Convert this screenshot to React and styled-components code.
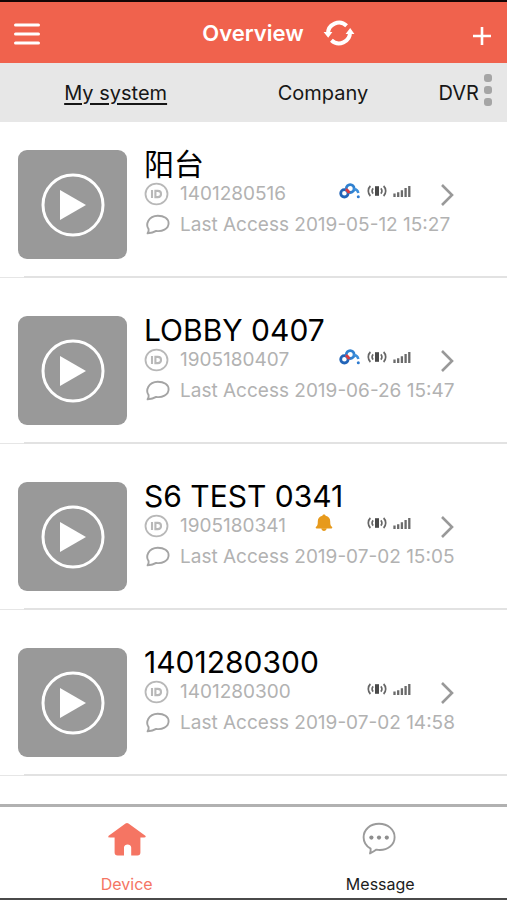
import { useState } from 'react'
import styled, { createGlobalStyle } from 'styled-components'

const GlobalStyle = createGlobalStyle`
  * {
    box-sizing: border-box;
  }
  body {
    margin: 0;
    background: #fff;
    font-family: Inter, 'Noto Sans CJK SC', sans-serif;
  }
  button {
    margin: 0;
    padding: 0;
    border: none;
    background: none;
    color: inherit;
    font: inherit;
    cursor: pointer;
  }
  svg {
    display: block;
  }
`

const Page = styled.div`
  display: flex;
  flex-direction: column;
  min-height: 100vh;
  border-top: 2px solid #140505;
  border-bottom: 2px solid #4a4a4a;
`

const Header = styled.header`
  display: grid;
  grid-template-columns: 1fr auto 1fr;
  align-items: center;
  height: 61px;
  padding: 0 15px 0 13px;
  background: #f0624d;
  color: #fff;
`

const HeaderCenter = styled.div`
  display: flex;
  align-items: center;
  gap: 19px;
  padding-left: 52px;
`

const Title = styled.h1`
  margin: 0;
  font-size: 22px;
  font-weight: 600;
  line-height: 28px;
`

const AddButton = styled.button`
  justify-self: end;
  padding-top: 6px;
`

const Tabs = styled.nav`
  display: grid;
  grid-template-columns: 1fr 1fr auto auto;
  align-items: center;
  height: 59px;
  padding: 0 15px 0 12px;
  background: #e7e7e7;
`

const Tab = styled.button`
  color: #161616;
  font-size: 20px;
  line-height: 28px;
  text-decoration: ${(p) => (p.$active ? 'underline' : 'none')};
  text-decoration-thickness: 2px;
  text-underline-offset: 3px;

  &:nth-child(3) {
    padding-left: 12px;
  }
`

const MoreButton = styled.button`
  display: flex;
  flex-direction: column;
  gap: 4px;
  padding: 0 0 6px 5px;
`

const Dot = styled.span`
  width: 8px;
  height: 8px;
  border-radius: 3px;
  background: #a5a5a5;
`

const List = styled.ul`
  flex: 1;
  margin: 0;
  padding: 0;
  list-style: none;
`

const Item = styled.li`
  padding-top: 38px;

  &:first-child {
    padding-top: 28px;
  }
`

const ItemBody = styled.div`
  display: flex;
  gap: 17px;
  padding: 0 53px 17px 18px;
`

const Thumb = styled.button`
  display: flex;
  flex: none;
  align-items: center;
  justify-content: center;
  width: 109px;
  height: 109px;
  border-radius: 9px;
  background: #999;
`

const Info = styled.div`
  flex: 1;
  min-width: 0;
`

const Name = styled.h2`
  margin: 0;
  color: #000;
  font-size: 30px;
  font-weight: 400;
  line-height: 28px;
`

const Line = styled.div`
  display: flex;
  align-items: center;
  height: 31px;
  color: #b2b2b2;
  font-size: 19px;
  white-space: nowrap;
`

const LineIcon = styled.span`
  flex: none;
  width: 36px;
`

const Status = styled.div`
  display: grid;
  grid-template-columns: 18px 22px 20px 18px;
  gap: 6px;
  align-items: center;
  margin-left: auto;
  padding-bottom: 6px;
`

const OpenButton = styled.button`
  margin-left: 29px;
  padding-top: 2px;
`

const Divider = styled.div`
  display: flex;
  align-items: flex-end;
  height: 2px;

  &::before {
    content: '';
    width: 24px;
    height: 1px;
    background: #e6e6e6;
  }

  &::after {
    content: '';
    flex: 1;
    height: 2px;
    background: #e2e2e2;
  }
`

const BottomBar = styled.nav`
  display: grid;
  grid-template-columns: 1fr 1fr;
  height: 94px;
  border-top: 3px solid #b1b1b1;
`

const BottomItem = styled.button`
  display: flex;
  flex-direction: column;
  align-items: center;
  justify-content: space-between;
  padding: 15px 0 4px;
  color: ${(p) => (p.$active ? '#f57563' : '#1c1c1c')};
  font-size: 16px;
  line-height: 20px;
`

const devices = [
  { name: '阳台', id: '1401280516', access: '2019-05-12 15:27', linked: true },
  { name: 'LOBBY 0407', id: '1905180407', access: '2019-06-26 15:47', linked: true },
  { name: 'S6 TEST 0341', id: '1905180341', access: '2019-07-02 15:05', alarm: true },
  { name: '1401280300', id: '1401280300', access: '2019-07-02 14:58' },
]

const MenuIcon = () => (
  <svg width="28" height="26" viewBox="0 0 28 26" fill="none" stroke="#fff" strokeWidth="3" strokeLinecap="round">
    <path d="M2.5 5h23M2.5 14h23M2.5 23h23" />
  </svg>
)

const RefreshIcon = () => (
  <svg width="32" height="30" viewBox="0 0 32 30" fill="none" stroke="#fff" strokeWidth="4">
    <path d="M5 16A11 11 0 0 1 23.600 7.800" />
    <path d="M27 14A11 11 0 0 1 8.400 22.200" />
    <path d="M.6 14h8.800l-4.200 5.800zM31.400 16h-8.800l4.600-6z" fill="#fff" stroke="none" />
  </svg>
)

const PlusIcon = () => (
  <svg width="20" height="20" viewBox="0 0 20 20" stroke="#fff" strokeWidth="2.6">
    <path d="M10 1v18M1 10h18" />
  </svg>
)

const PlayIcon = () => (
  <svg width="64" height="64" viewBox="0 0 64 64">
    <circle cx="32" cy="32" r="30" fill="none" stroke="#fff" strokeWidth="3" />
    <path d="M19 17v30l26-15z" fill="#fff" />
  </svg>
)

const IdIcon = () => (
  <svg width="25" height="24" viewBox="0 0 25 24" fill="none" stroke="#b8b8b8">
    <ellipse cx="12.5" cy="12" rx="11" ry="10.3" strokeWidth="1.8" />
    <path d="M8 8v8M11.400 8.900v6.200h2.400c4.300 0 4.300-6.200 0-6.200z" strokeWidth="2.100" />
  </svg>
)

const BubbleIcon = () => (
  <svg width="26" height="22" viewBox="0 0 26 22" fill="none" stroke="#a4a4a4" strokeWidth="1.9" strokeLinejoin="round">
    <path d="M3.600 19.400c1-1.500 1.300-2.800 1-4.300C1.300 10.400 4.200 1.900 13.800 1.700c6.400 0 10.800 3.200 10.800 7.600 0 5.800-6.800 8.600-12.400 7.600-1.800 1.200-4.800 2.300-8.600 2.500z" />
  </svg>
)

const LinkIcon = () => (
  <svg width="22" height="16" viewBox="0 0 22 16" fill="none" strokeWidth="2.8">
    <circle cx="5.400" cy="10.300" r="3.700" stroke="#2264b8" />
    <circle cx="11.200" cy="5.600" r="3.900" stroke="#2f80d0" />
    <path d="M14.200 6.400c2.600-.6 4.400.6 5.200 3.600" stroke="#3d8fdb" strokeWidth="2.400" />
    <path d="M6.600 6.600c1.800.4 3 1.600 3.400 3.600" stroke="#dc3b42" strokeWidth="2.800" />
    <circle cx="19.300" cy="13.800" r="1.500" fill="#2e7bd0" />
  </svg>
)

const SignalIcon = () => (
  <svg width="20" height="12" viewBox="0 0 20 12" fill="none" stroke="#666" strokeWidth="1.700">
    <path d="M8 1.200h4v9.600H8z" fill="#4a4a4a" stroke="none" />
    <path d="M3.400 1C.6 3.500.6 8.500 3.400 11M16.600 1c2.800 2.500 2.800 7.500 0 10M6.200 3.400c-1.500 1.400-1.500 3.800 0 5.200M13.800 3.400c1.500 1.400 1.500 3.800 0 5.200" />
  </svg>
)

const BarsIcon = () => (
  <svg width="18" height="14" viewBox="0 0 18 14" stroke="#6a6a6a" strokeWidth="2.300">
    <path d="M1.500 13V9.600M5.200 13V8.200M8.900 13V6.200M12.600 13V4M16.300 13V2" />
  </svg>
)

const BellIcon = () => (
  <svg width="18" height="18" viewBox="0 0 18 18" fill="#e79a1c">
    <path d="M9 .6c.9 0 1.400.5 1.600 1.100 3 .6 4.600 2.700 4.600 5.600 0 3.300.4 4.600 1.700 5.500.7.500.5 1.800-.5 1.800H1.600c-1 0-1.200-1.300-.5-1.800 1.300-.9 1.700-2.200 1.700-5.500 0-2.900 1.600-5 4.600-5.600C7.600 1.100 8.100.6 9 .6z" />
    <path d="M6.300 14.200h5.400c-.3 1.900-1.200 2.700-2.700 2.700s-2.400-.8-2.700-2.700z" />
  </svg>
)

const ChevronIcon = () => (
  <svg width="14" height="24" viewBox="0 0 14 24" fill="none" stroke="#999" strokeWidth="2.600">
    <path d="M2 2l10 10L2 22" />
  </svg>
)

const HomeIcon = () => (
  <svg width="38" height="36" viewBox="0 0 38 36" fill="#f57563">
    <path d="M17.500 1.600c1-.7 2-.7 3 0L37 13.400c1.200.9.800 2-.6 2h-4v15.200c0 2-1 3-3 3H23.200v-8c0-4-7.200-4-7.200 0v8H9.600c-2 0-3-1-3-3V15.400H1.600c-1.400 0-1.800-1.100-.6-2z" />
  </svg>
)

const MessageIcon = () => (
  <svg width="36" height="36" viewBox="0 0 36 36" fill="none" stroke="#9b9b9b" strokeWidth="1.900" strokeLinejoin="round">
    <path d="M8.600 26.600C4 24 1.600 19.800 1.600 15.200c0-7.400 6.400-13.400 15.400-13.400s15.600 5.800 15.600 13.400-6.800 13-15.200 12.800c-1.200 0-2-.2-3-.4-1.800 1.400-3.800 2.600-6.400 3.800.6-1.600.8-3 .6-4.800z" />
    <g fill="#8e8e8e" stroke="none">
      <circle cx="9.400" cy="15.600" r="2.100" />
      <circle cx="17" cy="15.600" r="2.100" />
      <circle cx="24.800" cy="15.600" r="2.100" />
    </g>
  </svg>
)

function Device({ device }) {
  return (
    <Item>
      <ItemBody>
        <Thumb aria-label={`Play ${device.name}`}>
          <PlayIcon />
        </Thumb>
        <Info>
          <Name>{device.name}</Name>
          <Line>
            <LineIcon><IdIcon /></LineIcon>
            {device.id}
            <Status>
              <span>{device.alarm && <BellIcon />}</span>
              <span>{device.linked && <LinkIcon />}</span>
              <SignalIcon />
              <BarsIcon />
            </Status>
            <OpenButton aria-label={`Open ${device.name}`}>
              <ChevronIcon />
            </OpenButton>
          </Line>
          <Line>
            <LineIcon><BubbleIcon /></LineIcon>
            Last Access {device.access}
          </Line>
        </Info>
      </ItemBody>
      <Divider />
    </Item>
  )
}

export default function App() {
  const [tab, setTab] = useState('My system')

  return (
    <Page>
      <GlobalStyle />
      <Header>
        <button aria-label="Menu"><MenuIcon /></button>
        <HeaderCenter>
          <Title>Overview</Title>
          <button aria-label="Refresh"><RefreshIcon /></button>
        </HeaderCenter>
        <AddButton aria-label="Add device"><PlusIcon /></AddButton>
      </Header>
      <Tabs>
        {['My system', 'Company', 'DVR'].map((name) => (
          <Tab key={name} $active={tab === name} onClick={() => setTab(name)}>
            {name}
          </Tab>
        ))}
        <MoreButton aria-label="More">
          <Dot />
          <Dot />
          <Dot />
        </MoreButton>
      </Tabs>
      <List>
        {devices.map((device) => (
          <Device key={device.id} device={device} />
        ))}
      </List>
      <BottomBar>
        <BottomItem $active>
          <HomeIcon />
          Device
        </BottomItem>
        <BottomItem>
          <MessageIcon />
          Message
        </BottomItem>
      </BottomBar>
    </Page>
  )
}
